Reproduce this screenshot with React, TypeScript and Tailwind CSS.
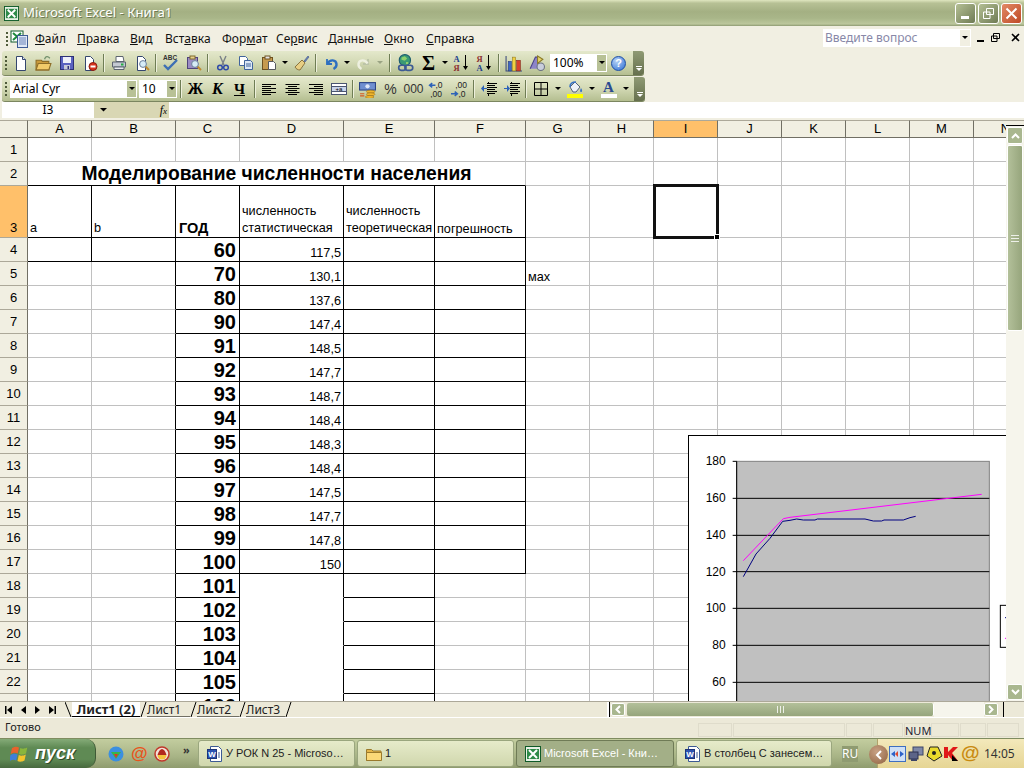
import type { ReactNode } from "react";

const rowHeadCls = "flex justify-center border-r border-b border-r-[#716f64] border-b-[#aca899] text-[13px]";

const menus = [
  { w: "w-[42px]", a: "", u: "Ф", b: "айл" },
  { w: "w-[53px]", a: "", u: "П", b: "равка" },
  { w: "w-[35px]", a: "", u: "В", b: "ид" },
  { w: "w-[57px]", a: "Вст", u: "а", b: "вка" },
  { w: "w-[54px]", a: "Фор", u: "м", b: "ат" },
  { w: "w-[52px]", a: "Се", u: "р", b: "вис" },
  { w: "w-[56px]", a: "", u: "Д", b: "анные" },
  { w: "w-[42px]", a: "", u: "О", b: "кно" },
  { w: "w-[60px]", a: "", u: "С", b: "правка" },
];

const years = [60, 70, 80, 90, 91, 92, 93, 94, 95, 96, 97, 98, 99, 100, 101, 102, 103, 104, 105, 106];
const stats = ["117,5", "130,1", "137,6", "147,4", "148,5", "147,7", "148,7", "148,4", "148,3", "148,4", "147,5", "147,7", "147,8", "150"];
const columns = ["A", "B", "C", "D", "E", "F", "G", "H", "I", "J", "K", "L", "M", "N"];

const S = ({ children, w = 16, h = 16, vb = "0 0 16 16" }: { children: ReactNode; w?: number; h?: number; vb?: string }) => (
  <svg width={w} height={h} viewBox={vb} className="block">
    {children}
  </svg>
);

const Btn = ({ children, w = "w-[23px]" }: { children: ReactNode; w?: string }) => (
  <div className={`${w} h-full flex items-center justify-center shrink-0`}>{children}</div>
);

const Dd = ({ w = "w-[10px]", off = false }: { w?: string; off?: boolean }) => (
  <div className={`${w} h-full flex items-center justify-center shrink-0`}>
    <svg width="6" height="4" viewBox="0 0 6 4">
      <path d="M0 0h6L3 3z" fill={off ? "#9aa383" : "#000"} />
    </svg>
  </div>
);

const Sep = ({ w = "w-[6px]" }: { w?: string }) => (
  <div className={`${w} h-full flex items-center justify-center shrink-0`}>
    <div className="w-px h-[18px] bg-[#6f7d55] border-r border-r-[#eef0dc] box-content" />
  </div>
);

const Grip = () => (
  <div className="w-[7px] h-full flex flex-col items-center justify-center gap-[2px] shrink-0">
    {[0, 1, 2, 3].map((i) => (
      <div key={i} className="w-[2px] h-[2px] bg-[#4f5a3a]" />
    ))}
  </div>
);

const Chevron = () => (
  <div className="w-[11px] h-full ml-auto rounded-r-[3px] bg-[linear-gradient(180deg,#8f9a74,#66704e)] flex flex-col items-center justify-end pb-[3px] gap-[1px]">
    <div className="w-[6px] h-px bg-white" />
    <svg width="6" height="4" viewBox="0 0 6 4">
      <path d="M0 0h6L3 3z" fill="#fff" />
    </svg>
  </div>
);

const Doc = ({ x = 3, y = 1, w = 10, h = 14 }: { x?: number; y?: number; w?: number; h?: number }) => (
  <path d={`M${x + 0.5} ${y + 0.5}h${w - 4}l3 3v${h - 3}h-${w - 1}z`} fill="#fff" stroke="#34466f" />
);

const Glass = () => (
  <g>
    <path d="M11 11l4 4" stroke="#c08a30" strokeWidth="2" />
    <circle cx="9" cy="9" r="3.4" fill="#d6ecf7" stroke="#6a7f9a" />
  </g>
);

const New = () => <S><Doc /><path d="M9.5 1.5v3h3" fill="#dfe5f2" stroke="#34466f" /></S>;
const Open = () => (
  <S w={17} h={17}>
    <path d="M1 5h5l1 1h6v8H1z" fill="#c99a3c" stroke="#8d6d28" />
    <path d="M3 8h12l-2 6H1z" fill="#f2cb6a" stroke="#8d6d28" />
    <path d="M9 4c1-3 3-3 5-1" fill="none" stroke="#6f8e6a" strokeWidth="1.2" />
  </S>
);
const Save = () => (
  <S>
    <rect x="1.5" y="1.5" width="13" height="13" fill="#5a62c0" stroke="#2c3076" />
    <rect x="4" y="2" width="8" height="6" fill="#eef0fa" />
    <rect x="5" y="10" width="6" height="4.5" fill="#c8cad8" />
    <rect x="8.5" y="11" width="1.5" height="3" fill="#2c3076" />
  </S>
);
const Perm = () => (
  <S>
    <Doc w={9} />
    <circle cx="11" cy="11.5" r="4" fill="#d8321e" stroke="#8a1d10" />
    <rect x="8.5" y="10.5" width="5" height="2" fill="#fff" />
  </S>
);
const Printer = () => (
  <S>
    <path d="M5 1.5h7l1 5H5z" fill="#fff" stroke="#5d6470" />
    <path d="M1.5 7h13v5h-13z" fill="#c4c9d2" stroke="#5d6470" />
    <path d="M3 12h10v2.5H3z" fill="#e9ebef" stroke="#5d6470" />
    <rect x="10" y="8.5" width="2.5" height="2" fill="#23b043" />
  </S>
);
const Preview = () => <S><Doc w={9} /><Glass /></S>;
const Spell = () => (
  <S w={17} h={18} vb="0 0 17 18">
    <text x="1" y="6" fontSize="6.5" fontWeight="700" fontFamily="Liberation Sans" fill="#333">ABC</text>
    <path d="M2 11l4 4 9-9" fill="none" stroke="#3d6fb4" strokeWidth="2.4" />
  </S>
);
const Research = () => (
  <S>
    <rect x="1.5" y="2.5" width="10" height="11" fill="#9c8cc4" stroke="#50447c" />
    <rect x="4" y="1" width="5" height="3" fill="#e6d08c" stroke="#7e6a2c" />
    <Glass />
  </S>
);
const Cut = () => (
  <S>
    <path d="M5 1l4 9M11 1L7 10" stroke="#7a8088" strokeWidth="1.4" />
    <circle cx="5" cy="12.5" r="2.3" fill="none" stroke="#2e4aa8" strokeWidth="1.5" />
    <circle cx="11" cy="12.5" r="2.3" fill="none" stroke="#2e4aa8" strokeWidth="1.5" />
  </S>
);
const Copy = () => (
  <S>
    <path d="M1.5 1.5h6l2 2v7h-8z" fill="#fff" stroke="#41649c" />
    <path d="M6.5 5.5h6l2 2v7h-8z" fill="#dde8f6" stroke="#41649c" />
    <path d="M8 9h5M8 11h5" stroke="#41649c" />
  </S>
);
const Paste = () => (
  <S>
    <rect x="1.5" y="2.5" width="10" height="12" fill="#c69a4e" stroke="#6e5220" />
    <rect x="4" y="1" width="5" height="3" fill="#e4e4e4" stroke="#6e5220" />
    <path d="M7.5 6.5h5l2 2v6h-7z" fill="#fff" stroke="#55585e" />
  </S>
);
const Brush = () => (
  <S>
    <path d="M10 6l4-5 1 1-4 5z" fill="#6a83b8" stroke="#3f5486" strokeWidth=".6" />
    <path d="M1 12l7-7 3 3-5 7c-2 0-4-1-5-3z" fill="#e8cf84" stroke="#8a7440" />
  </S>
);
const Undo = ({ c = "#2d6fc0" }: { c?: string }) => (
  <S>
    <path d="M4 4v5h5" fill="none" stroke={c} strokeWidth="1.8" />
    <path d="M4.5 8.5C7 4 13 4.5 13.5 9c.2 2-1 4-3 5" fill="none" stroke={c} strokeWidth="2.4" />
  </S>
);
const Redo = () => (
  <S>
    <g transform="matrix(-1 0 0 1 16 0)">
      <path d="M4 4v5h5" fill="none" stroke="#bcc4a8" strokeWidth="1.8" />
      <path d="M4.5 8.5C7 4 13 4.5 13.5 9c.2 2-1 4-3 5" fill="none" stroke="#eef0e0" strokeWidth="2.4" />
    </g>
  </S>
);
const Link = () => (
  <S w={18} h={18} vb="0 0 16 16">
    <circle cx="7" cy="5.5" r="5" fill="#3a9a74" stroke="#1c5c6e" />
    <path d="M4 3l3-1 2 2-2 2-3-1zM8 7l2 0 0 2-2 0z" fill="#8ed06c" />
    <rect x="1.5" y="10" width="6.5" height="4.5" rx="2.2" fill="none" stroke="#3c5a94" strokeWidth="1.5" />
    <rect x="7" y="10" width="7" height="4.5" rx="2.2" fill="none" stroke="#3c5a94" strokeWidth="1.5" />
  </S>
);
const Sort = ({ top, bot, ct, cb }: { top: string; bot: string; ct: string; cb: string }) => (
  <S w={17} h={18} vb="0 0 17 18">
    <text x="0.5" y="8" fontSize="8.5" fontWeight="700" fontFamily="Liberation Serif" fill={ct}>{top}</text>
    <text x="0.5" y="16.5" fontSize="8.5" fontWeight="700" fontFamily="Liberation Serif" fill={cb}>{bot}</text>
    <path d="M12.5 1v13" stroke="#000" />
    <path d="M10 12h5l-2.5 4z" fill="#000" />
  </S>
);
const Chart = () => (
  <S w={17} h={17}>
    <path d="M1 1v14h15" fill="none" stroke="#3c4a7c" />
    <rect x="3" y="6" width="3" height="9" fill="#3f68c4" stroke="#24366e" strokeWidth=".5" />
    <rect x="7" y="2" width="3" height="13" fill="#f0d040" stroke="#8a7420" strokeWidth=".5" />
    <rect x="11" y="5" width="3.5" height="10" fill="#d8402c" stroke="#7c2214" strokeWidth=".5" />
  </S>
);
const Drawing = () => (
  <S w={17} h={17}>
    <path d="M2 13L7 2h2l2 11" fill="#8c84c8" stroke="#4a4288" />
    <circle cx="12" cy="11" r="3.5" fill="#c9cedc" stroke="#6a7080" />
    <path d="M9 1l5 3-5 4z" fill="#e6d56a" stroke="#8a7a28" />
  </S>
);
const Help = () => (
  <div className="w-[15px] h-[15px] rounded-full border border-[#1c4ea8] bg-[radial-gradient(circle_at_35%_30%,#b6d2f6,#2e6fd4)] flex items-center justify-center text-white text-[11px] font-bold leading-none font-['Liberation_Sans',sans-serif]">?</div>
);
const Lines = ({ kind }: { kind: "l" | "c" | "r" }) => {
  const ws = [14, 9, 14, 9, 14, 9];
  return (
    <S w={15} h={13} vb="0 0 15 13">
      {ws.map((w, i) => (
        <rect key={i} x={kind === "l" ? 0 : kind === "r" ? 15 - w : (15 - w) / 2} y={i * 2 + 1} width={w} height="1" fill="#000" />
      ))}
    </S>
  );
};
const Merge = () => (
  <S>
    <rect x="0.5" y="2.5" width="15" height="11" fill="#fff" stroke="#4a5570" />
    <rect x="0.5" y="5.5" width="15" height="5" fill="#c9d4ea" stroke="#4a5570" />
    <text x="4.5" y="10" fontSize="6" fontFamily="Liberation Sans" fill="#000">+a</text>
  </S>
);
const Currency = () => (
  <S w={17} h={17}>
    <rect x="0.5" y="1.5" width="15" height="7" fill="#6f8fd0" stroke="#2c4484" />
    <circle cx="8" cy="5" r="2" fill="#dfe8f8" />
    <ellipse cx="11" cy="10" rx="4" ry="1.4" fill="#f0b52c" stroke="#8a6414" strokeWidth=".5" />
    <ellipse cx="11" cy="12.5" rx="4" ry="1.4" fill="#f0b52c" stroke="#8a6414" strokeWidth=".5" />
    <ellipse cx="10" cy="15" rx="4" ry="1.4" fill="#f0b52c" stroke="#8a6414" strokeWidth=".5" />
    <path d="M1 12h4M1 14h4" stroke="#d65a20" />
  </S>
);
const Dec = ({ flip = false }: { flip?: boolean }) => (
  <S w={17} h={17}>
    <text x={flip ? 4 : 7} y="7" fontSize="8" fontFamily="Liberation Sans" fill="#222">{flip ? ",00" : ",0"}</text>
    <text x={flip ? 7 : 2} y="15" fontSize="8" fontFamily="Liberation Sans" fill="#222">{flip ? ",0" : ",00"}</text>
    {flip ? (
      <path d="M0 12h5M3.5 10l2.5 2-2.5 2" fill="none" stroke="#2d62b8" strokeWidth="1.4" />
    ) : (
      <path d="M7 4H2M4 2L1.5 4 4 6" fill="none" stroke="#2d62b8" strokeWidth="1.4" />
    )}
  </S>
);
const Indent = ({ right = false }: { right?: boolean }) => (
  <S w={16} h={14} vb="0 0 16 14">
    {[1, 3, 5, 7, 9, 11].map((y) => (
      <rect key={y} x="6" y={y} width={y % 4 === 1 ? 10 : 8} height="1" fill="#000" />
    ))}
    {[0, 12].map((y) => (
      <rect key={y} x="7" y={y} width="1" height="2" fill="#000" />
    ))}
    {right ? (
      <path d="M0 6h3V3l3 3.5L3 10V7H0z" fill="#2d62b8" />
    ) : (
      <path d="M6 6H3V3L0 6.5 3 10V7h3z" fill="#2d62b8" />
    )}
  </S>
);
const Borders = () => (
  <S w={14} h={14} vb="0 0 14 14">
    <path d="M.5.5h13v13H.5zM7 .5v13M.5 7h13" fill="none" stroke="#000" />
  </S>
);
const Fill = () => (
  <div className="flex flex-col items-center">
    <S w={16} h={13} vb="0 0 16 13">
      <path d="M3 6l5-5 5 5-4 5H6z" fill="#eef2f8" stroke="#54607a" />
      <path d="M9 1c-4 0-6 1-6 5" fill="none" stroke="#3872c4" strokeWidth="1.6" />
      <path d="M14 7c1.5 2 1.5 4 0 4s-1-2 0-4z" fill="#3872c4" />
    </S>
    <div className="w-[16px] h-[4px] bg-[#ffff00]" />
  </div>
);
const FontColor = () => (
  <div className="flex flex-col items-center w-[16px]">
    <span className="text-[15px] leading-[13px] font-bold font-['Liberation_Serif',serif] text-[#2a4a90]">A</span>
    <div className="w-[16px] h-[4px] bg-white" />
  </div>
);
const ExcelIcon = ({ size = 16 }: { size?: number }) => (
  <S w={size} h={size}>
    <rect x="0.5" y="0.5" width="15" height="15" fill="#e8f2e6" stroke="#0f5a28" />
    <rect x="2" y="3" width="12" height="10" fill="#2e8a48" />
    <path d="M4 4l8 8M12 4l-8 8" stroke="#fff" strokeWidth="2" />
  </S>
);
const MenuExcel = () => (
  <S w={18} h={18} vb="0 0 18 18">
    <rect x="1" y="1" width="12" height="11" fill="#fff" stroke="#0f5a28" />
    <path d="M3 3l8 7M11 3l-8 7" stroke="#1c8a3c" strokeWidth="2" />
    <rect x="7.5" y="5.5" width="10" height="12" fill="#dfe7f6" stroke="#3c5a94" />
    <path d="M9 8h7M9 10h7M9 12h7M9 14h7" stroke="#6a83b8" />
  </S>
);
const WordIcon = () => (
  <S>
    <path d="M3.5.5h8l3 3v12h-11z" fill="#fff" stroke="#3c5a94" />
    <rect x="0.5" y="3.5" width="9" height="9" fill="#2c52b0" stroke="#1c3478" />
    <text x="1.3" y="10.8" fontSize="8" fontWeight="700" fontFamily="Liberation Sans" fill="#fff">W</text>
    <path d="M11 7h2M11 9h2M11 11h2" stroke="#3c5a94" />
  </S>
);
const FolderIcon = () => (
  <S>
    <path d="M.5 3.5h5l1.5 1.5h8v9.5H.5z" fill="#e4b64a" stroke="#9a7a2c" />
    <path d="M.5 6.5h15v8H.5z" fill="#fbd978" stroke="#9a7a2c" />
  </S>
);

const Title = () => (
  <div className="h-[26px] shrink-0 flex items-center pl-[4px] pr-[2px] bg-[linear-gradient(180deg,#dfe6bf_0%,#b7c195_12%,#a4b083_45%,#a9b689_70%,#bcc79c_92%,#8e9a72_100%)]">
    <ExcelIcon size={15} />
    <span className="ml-[4px] text-[13.2px] text-white font-['Noto_Sans',sans-serif] [text-shadow:1px_1px_#6f7a55]">Microsoft Excel - Книга1</span>
    <div className="ml-auto flex gap-[2px]">
      <div className="w-[21px] h-[21px] rounded-[3px] border border-white bg-[linear-gradient(135deg,#b4bf94,#6f7b54)] flex items-end pl-[5px] pb-[4px]">
        <div className="w-[8px] h-[3px] bg-white" />
      </div>
      <div className="w-[21px] h-[21px] rounded-[3px] border border-white bg-[linear-gradient(135deg,#b4bf94,#6f7b54)] flex items-center justify-center">
        <svg width="11" height="11" viewBox="0 0 11 11">
          <path d="M3.5.5h7v6h-7zM.5 4h6.5v6.5H.5z" fill="none" stroke="#fff" />
        </svg>
      </div>
      <div className="w-[21px] h-[21px] rounded-[3px] border border-white bg-[linear-gradient(135deg,#e28a66,#bf4a26)] flex items-center justify-center">
        <svg width="13" height="13" viewBox="0 0 13 13">
          <path d="M1.5 1.5l10 10M11.5 1.5l-10 10" stroke="#fff" strokeWidth="2" />
        </svg>
      </div>
    </div>
  </div>
);

const MenuBar = () => (
  <div className="h-[25px] shrink-0 flex items-center bg-[#f1efe2] text-[12px] text-[#111] font-['Noto_Sans',sans-serif]">
    <div className="ml-[3px]"><Grip /></div>
    <MenuExcel />
    <div className="flex ml-[7px]">
      {menus.map((m) => (
        <div key={m.a + m.u} className={`${m.w} whitespace-nowrap`}>
          {m.a}<span className="underline">{m.u}</span>{m.b}
        </div>
      ))}
    </div>
    <div className="absolute left-[823px] top-[29px] w-[148px] h-[18px] bg-white flex items-center pl-[2px] text-[12px] text-[#8888a8]">
      Введите вопрос
      <div className="ml-auto w-[11px] h-full bg-[#f1efe2] border-y border-r border-white flex items-center justify-center">
        <svg width="6" height="4" viewBox="0 0 6 4"><path d="M0 0h6L3 3z" fill="#000" /></svg>
      </div>
    </div>
    <div className="absolute left-[976px] top-[33px] flex items-center">
      <div className="w-[9px] h-[9px] flex items-end justify-center"><div className="w-[7px] h-[2px] bg-black" /></div>
      <svg className="ml-[6px]" width="9" height="9" viewBox="0 0 9 9">
        <path d="M2.5.5h6v5h-6zM.5 3h5.500v5.500H.5z" fill="#f1efe2" stroke="#000" />
      </svg>
      <svg className="ml-[11px]" width="9" height="9" viewBox="0 0 9 9">
        <path d="M1 1l7 7M8 1L1 8" stroke="#000" strokeWidth="1.6" />
      </svg>
    </div>
  </div>
);

const TB = ({ children, w }: { children: ReactNode; w: string }) => (
  <div className={`${w} h-[25px] ml-[2px] flex items-center rounded-l-[3px] rounded-r-[3px] border-b border-b-[#7b8660] bg-[linear-gradient(180deg,#e4e8cb_0%,#d4dab6_45%,#b4be90_100%)]`}>
    {children}
  </div>
);

const Toolbars = () => (
  <div className="h-[51px] shrink-0 bg-[#f1efe2] flex flex-col gap-px">
    <TB w="w-[642px]">
      <Grip />
      <Btn><New /></Btn><Btn><Open /></Btn><Btn><Save /></Btn><Btn><Perm /></Btn>
      <Sep />
      <Btn><Printer /></Btn><Btn><Preview /></Btn>
      <Sep />
      <Btn><Spell /></Btn><Btn><Research /></Btn>
      <Sep />
      <Btn><Cut /></Btn><Btn><Copy /></Btn><Btn><Paste /></Btn><Dd />
      <Btn><Brush /></Btn>
      <Sep />
      <Btn><Undo /></Btn><Dd />
      <Btn><Redo /></Btn><Dd off />
      <Sep w="w-[9px]" />
      <Btn><Link /></Btn>
      <Btn><span className="font-['Liberation_Serif',serif] font-bold text-[20px] leading-none">Σ</span></Btn><Dd />
      <Btn><Sort top="A" bot="Я" ct="#1f3f8c" cb="#8c2f2f" /></Btn>
      <Btn><Sort top="Я" bot="A" ct="#8c2f2f" cb="#1f3f8c" /></Btn>
      <Sep />
      <Btn><Chart /></Btn><Btn><Drawing /></Btn>
      <div className="ml-[2px] w-[57px] h-[18px] bg-white flex items-center pl-[3px] text-[12px] font-['Noto_Sans',sans-serif] shrink-0">
        100%
        <div className="ml-auto w-[11px] h-full bg-[#b8c196] border border-white flex items-center justify-center">
          <svg width="6" height="4" viewBox="0 0 6 4"><path d="M0 0h6L3 3z" fill="#000" /></svg>
        </div>
      </div>
      <Btn><Help /></Btn>
      <Chevron />
    </TB>
    <TB w="w-[643px]">
      <Grip />
      <div className="ml-px w-[127px] h-[18px] bg-white flex items-center pl-[3px] text-[12px] font-['Noto_Sans',sans-serif] shrink-0">
        Arial Cyr
        <div className="ml-auto w-[11px] h-full bg-[#b8c196] border border-white flex items-center justify-center">
          <svg width="6" height="4" viewBox="0 0 6 4"><path d="M0 0h6L3 3z" fill="#000" /></svg>
        </div>
      </div>
      <div className="ml-[2px] w-[38px] h-[18px] bg-white flex items-center pl-[3px] text-[12px] font-['Noto_Sans',sans-serif] shrink-0">
        10
        <div className="ml-auto w-[11px] h-full bg-[#b8c196] border border-white flex items-center justify-center">
          <svg width="6" height="4" viewBox="0 0 6 4"><path d="M0 0h6L3 3z" fill="#000" /></svg>
        </div>
      </div>
      <Sep w="w-[7px]" />
      <Btn><span className="font-['Liberation_Serif',serif] font-bold text-[16px] leading-none">Ж</span></Btn>
      <Btn w="w-[21px]"><span className="font-['Liberation_Serif',serif] font-bold italic text-[16px] leading-none">К</span></Btn>
      <Btn><span className="font-['Liberation_Serif',serif] font-bold text-[15px] leading-none underline">Ч</span></Btn>
      <Sep w="w-[7px]" />
      <Btn><Lines kind="l" /></Btn><Btn><Lines kind="c" /></Btn><Btn><Lines kind="r" /></Btn><Btn><Merge /></Btn>
      <Sep />
      <Btn><Currency /></Btn>
      <Btn><span className="font-['Liberation_Sans',sans-serif] text-[14px] text-[#333]">%</span></Btn>
      <Btn><span className="font-['Liberation_Sans',sans-serif] text-[12px] text-[#333]">000</span></Btn>
      <Btn><Dec /></Btn><Btn><Dec flip /></Btn>
      <Sep />
      <Btn><Indent /></Btn><Btn><Indent right /></Btn>
      <Sep />
      <Btn><Borders /></Btn><Dd w="w-[11px]" />
      <Btn><Fill /></Btn><Dd w="w-[11px]" />
      <Btn><FontColor /></Btn><Dd w="w-[11px]" />
      <Chevron />
    </TB>
  </div>
);

const FormulaBar = () => (
  <div className="h-[18px] shrink-0 bg-[#f1efe2]">
    <div className="h-[16px] flex items-stretch">
      <div className="ml-[2px] w-[92px] bg-white text-center text-[12px] leading-[16px] font-['Noto_Sans',sans-serif]">I3</div>
      <div className="w-[75px] bg-[#d9d7b4] flex items-center justify-between pl-[6px] pr-[2px]">
        <svg width="7" height="4" viewBox="0 0 7 4"><path d="M0 0h7L3.5 3.5z" fill="#000" /></svg>
        <span className="font-['Liberation_Serif',serif] italic text-[12px] leading-none">f<span className="text-[9px]">x</span></span>
      </div>
      <div className="flex-1 bg-white" />
    </div>
  </div>
);

const Cell = ({ row, col }: { row: number; col: number }) => {
  const inTable = row >= 3 && row <= 17 && col >= 0 && col <= 5;
  let right = "border-r-[#c0c0c0]";
  let bottom = "border-b-[#c0c0c0]";
  if (row <= 4 && row >= 3 && col <= 5) {
    right = "border-r-black";
    bottom = "border-b-black";
  } else if (inTable) {
    if (col >= 1) right = "border-r-black";
    if (col >= 2) bottom = "border-b-black";
  } else if (row > 17) {
    if (col >= 1 && col <= 4) right = "border-r-black";
    if (col === 2 || col === 4) bottom = "border-b-black";
    if (col === 3) bottom = "border-b-white";
  }
  let content: ReactNode = null;
  if (row === 3 && col === 0) content = <span className="pl-[2px] pb-px">a</span>;
  if (row === 3 && col === 1) content = <span className="pl-[2px] pb-px">b</span>;
  if (row === 3 && col === 2) content = <span className="pl-[3px] font-bold text-[14.5px] leading-[18px]">ГОД</span>;
  if (row === 3 && col === 3) content = <span className="pl-[2px] leading-[17px]">численность<br />статистическая</span>;
  if (row === 3 && col === 4) content = <span className="pl-[2px] leading-[17px]">численность<br />теоретическая</span>;
  if (row === 3 && col === 5) content = <span className="pl-[2px]">погрешность</span>;
  if (row >= 4 && col === 2) content = <span className="ml-auto pr-[3px] font-bold text-[20px] leading-[21px]">{years[row - 4]}</span>;
  if (row >= 4 && row <= 17 && col === 3) content = <span className="ml-auto pr-[2px]">{stats[row - 4]}</span>;
  if (row === 5 && col === 6) content = <span className="pl-[2px]">мах</span>;
  return (
    <div className={`min-w-0 border-r border-b flex items-end overflow-visible whitespace-nowrap text-[12.7px] leading-[15px] relative ${right} ${bottom}`}>
      {content}
      {row === 3 && col === 8 && (
        <div className="absolute -left-px -top-[2px] w-[66px] h-[55px] border-[3px] border-[#111] z-10">
          <div className="absolute -right-[4px] -bottom-[4px] w-[6px] h-[6px] bg-black border border-white" />
        </div>
      )}
    </div>
  );
};

const blueLine = "190,440 228,372 270,325 308,274 330,271 350,267 370,270 405,270 412,267 555,267 580,273 605,273 612,270 670,270 690,263 707,259";
const pinkLine = "190,392 310,266 330,262 905,193";
const ticks = [
  { v: 180, y: 94 },
  { v: 160, y: 205 },
  { v: 140, y: 316 },
  { v: 120, y: 425 },
  { v: 100, y: 535 },
  { v: 80, y: 646 },
  { v: 60, y: 757 },
];

const ChartObject = () => (
  <div className="absolute left-[688px] top-[315px] w-[318px] h-[266px] bg-white border-l border-t border-black overflow-hidden z-20">
    {/* drawn at the 3x scale the plot was measured in */}
    <svg width="1000" height="900" viewBox="0 0 3000 2700" className="block">
      <g transform="translate(-27,-18)">
        <rect x="170" y="94" width="758" height="900" fill="#c0c0c0" stroke="#808080" strokeWidth="3" />
        {ticks.map((t) => (
          <g key={t.v}>
            {t.v !== 180 && <line x1="158" x2="928" y1={t.y} y2={t.y} stroke="#000" strokeWidth="3" />}
            {t.v === 180 && <line x1="158" x2="170" y1={t.y} y2={t.y} stroke="#000" strokeWidth="3" />}
            <text x="137" y={t.y + 12} textAnchor="end" fontSize="36" fontFamily="Liberation Sans" fill="#000">{t.v}</text>
          </g>
        ))}
        <line x1="170" x2="170" y1="94" y2="994" stroke="#000" strokeWidth="3" />
        <polyline points={blueLine} fill="none" stroke="#000080" strokeWidth="3" />
        <polyline points={pinkLine} fill="none" stroke="#ff00ff" strokeWidth="3" />
        <rect x="961" y="526" width="60" height="126" fill="#fff" stroke="#000" strokeWidth="3" />
        <line x1="975" x2="985" y1="563" y2="563" stroke="#000080" strokeWidth="3" />
        <line x1="975" x2="985" y1="625" y2="625" stroke="#ff00ff" strokeWidth="3" />
      </g>
    </svg>
  </div>
);

const Sheet = () => {
  const rows = Array.from({ length: 23 }, (_, i) => i + 1);
  return (
    <div className="relative flex-1 h-full overflow-hidden bg-white text-black font-['Liberation_Sans',sans-serif]">
      <div className="w-[1038px] grid grid-cols-[28px_64px_84px_64px_104px_91px_91px_64px_64px_64px_64px_64px_64px_64px_64px] grid-rows-[18px_24px_24px_52px_repeat(20,24px)]">
        <div className="border-t border-r border-b border-t-[#aca899] border-r-[#716f64] border-b-[#716f64] bg-[#f1efe2]" />
        {columns.map((c) => (
          <div
            key={c}
            className={`border-t border-r border-b border-t-[#aca899] border-r-[#716f64] border-b-[#716f64] flex items-center justify-center text-[13px] ${c === "I" ? "bg-[#ffc06a]" : "bg-[#f1efe2]"}`}
          >
            {c}
          </div>
        ))}
        {rows.map((r) => (
          <div key={r} className="contents">
            <div className={`${rowHeadCls} ${r === 3 ? "bg-[#ffc06a] items-end" : "bg-[#f1efe2] items-center pt-px"}`}>{r}</div>
            {r === 2 ? (
              <>
                <div className="col-span-6 pt-[2px] border-r border-b border-r-[#c0c0c0] border-b-black flex items-center justify-center font-bold text-[19.3px] whitespace-nowrap">
                  Моделирование численности населения
                </div>
                {[6, 7, 8, 9, 10, 11, 12, 13].map((c) => (
                  <Cell key={c} row={r} col={c} />
                ))}
              </>
            ) : (
              columns.map((_, c) => <Cell key={c} row={r} col={c} />)
            )}
          </div>
        ))}
      </div>
      <ChartObject />
    </div>
  );
};

const VScroll = () => (
  <div className="w-[18px] h-full shrink-0 flex flex-col bg-[#f6f5ec]">
    <div className="h-[5px] bg-[#f1efe2] border-t border-t-[#aca899]" />
    <div className="h-px bg-black" />
    <div className="h-[17px] mt-[1px] mx-[1px] bg-[#a9b78f] border border-white rounded-[2px] flex items-center justify-center">
      <svg width="9" height="6" viewBox="0 0 9 6"><path d="M1 5l3.5-3.5L8 5" fill="none" stroke="#fff" strokeWidth="2" /></svg>
    </div>
    <div className="h-[186px] mx-[1px] mt-[1px] rounded-[2px] border border-white bg-[linear-gradient(90deg,#b3c09a,#96a57c)] flex items-center justify-center">
      <div className="w-[8px] h-[7px] border-y border-white/80 relative after:absolute after:left-0 after:right-0 after:top-[2px] after:h-px after:bg-white/80" />
    </div>
    <div className="mt-auto h-[16px] mb-px mx-[1px] bg-[#a9b78f] border border-white rounded-[2px] flex items-center justify-center">
      <svg width="9" height="6" viewBox="0 0 9 6"><path d="M1 1l3.5 3.5L8 1" fill="none" stroke="#fff" strokeWidth="2" /></svg>
    </div>
  </div>
);

const Slant = ({ back = false }: { back?: boolean }) => (
  <svg width="7" height="16" viewBox="0 0 7 16" className="block shrink-0">
    {back ? <path d="M0 0l6 15" stroke="#000" fill="none" /> : <path d="M6 0L1 15" stroke="#000" fill="none" />}
  </svg>
);

const Tabs = () => (
  <div className="h-[16px] shrink-0 flex items-stretch bg-[#ece9d8] border-t border-t-[#aca899]">
    <div className="w-[65px] flex items-center pl-[5px] gap-[9px] shrink-0">
      <svg width="7" height="8" viewBox="0 0 7 8"><path d="M0 0h1.5v8H0zM7 0v8L2 4z" fill="#000" /></svg>
      <svg width="5" height="8" viewBox="0 0 5 8"><path d="M5 0v8L0 4z" fill="#000" /></svg>
      <svg width="5" height="8" viewBox="0 0 5 8"><path d="M0 0v8l5-4z" fill="#000" /></svg>
      <svg width="7" height="8" viewBox="0 0 7 8"><path d="M5.5 0H7v8H5.5zM0 0v8l5-4z" fill="#000" /></svg>
    </div>
    <div className="flex items-stretch w-[542px] text-[12px] leading-[15px] font-['Noto_Sans',sans-serif] text-[#222] shrink-0">
      <Slant back />
      <div className="w-[68px] bg-white border-b border-b-black font-bold text-[13px] text-center whitespace-nowrap">Лист1 (2)</div>
      <Slant />
      <div className="w-[43px] border-b border-b-[#716f64]">Лист1</div>
      <Slant />
      <div className="w-[42px] border-b border-b-[#716f64]">Лист2</div>
      <Slant />
      <div className="w-[39px] border-b border-b-[#716f64]">Лист3</div>
      <Slant />
    </div>
    <div className="flex items-center h-full w-[3px] border-l-2 border-l-white border-r border-r-black shrink-0" />
    <div className="w-[14px] ml-[1px] my-[1px] bg-[#a9b78f] border border-white rounded-[2px] flex items-center justify-center shrink-0">
      <svg width="6" height="9" viewBox="0 0 6 9"><path d="M5 1L1.5 4.500 5 8" fill="none" stroke="#fff" strokeWidth="2" /></svg>
    </div>
    <div className="w-[307px] ml-[2px] my-[1px] rounded-[2px] border-r border-r-white bg-[linear-gradient(180deg,#b3c09a,#96a57c)] flex items-center justify-center shrink-0">
      <div className="w-[7px] h-[7px] border-x border-white/80 relative after:absolute after:top-0 after:bottom-0 after:left-[2px] after:w-px after:bg-white/80" />
    </div>
    <div className="w-[50px] bg-[#f6f5ec] shrink-0" />
    <div className="w-[14px] my-[1px] bg-[#a9b78f] border border-white rounded-[2px] flex items-center justify-center shrink-0">
      <svg width="6" height="9" viewBox="0 0 6 9"><path d="M1 1l3.500 3.500L1 8" fill="none" stroke="#fff" strokeWidth="2" /></svg>
    </div>
    <div className="w-[6px] border-r border-r-black shrink-0" />
  </div>
);

const panels = [
  { w: "w-[34px]", t: "" },
  { w: "w-[112px]", t: "" },
  { w: "w-[26px]", t: "" },
  { w: "w-[30px]", t: "" },
  { w: "w-[26px]", t: "NUM" },
  { w: "w-[28px]", t: "" },
  { w: "w-[26px]", t: "" },
  { w: "w-[32px]", t: "" },
];

const Status = () => (
  <div className="h-[21px] shrink-0 border-t border-t-white bg-[#ece9d8] flex items-end pb-px text-[11px] font-['Noto_Sans',sans-serif] text-[#222]">
    <div className="w-[698px] pl-[5px] pb-px leading-[18px]">Готово</div>
    <div className="flex gap-px">
      {panels.map((p, i) => (
        <div key={i} className={`${p.w} h-[14px] border border-[#dfdccb] text-[11px] leading-[13px] text-center text-[#223]`}>{p.t}</div>
      ))}
    </div>
  </div>
);

const XpFlag = () => (
  <svg width="20" height="18" viewBox="0 0 20 18">
    <path d="M2 3c3-1.500 5-1.500 7-.5l-1.300 6c-2-1-4-1-7 .5z" fill="#e8622c" />
    <path d="M10.300 3c2 1 4 1 7-.5l-1.300 6c-3 1.500-5 1.500-7 .5z" fill="#8ab63c" />
    <path d="M.5 10c3-1.500 5-1.500 7-.5l-1.300 6c-2-1-4-1-7 .5z" fill="#3f7fd8" />
    <path d="M8.800 10c2 1 4 1 7-.5l-1.300 6c-3 1.500-5 1.500-7 .5z" fill="#f4c42c" />
  </svg>
);

const TaskBtn = ({ w, icon, text, active = false }: { w: string; icon: ReactNode; text: string; active?: boolean }) => (
  <div
    className={`${w} h-[27px] shrink-0 flex items-center gap-[3px] pl-[8px] rounded-[3px] border text-[11px] whitespace-nowrap overflow-hidden font-['Liberation_Sans',sans-serif] ${
      active
        ? "bg-[#a3af87] border-[#6f7b56] text-white"
        : "bg-[linear-gradient(180deg,#e6ebca,#d0d7ad)] border-[#9aa67e] text-[#222]"
    }`}
  >
    {icon}
    <span>{text}</span>
  </div>
);

const Taskbar = () => (
  <div className="h-[30px] shrink-0 flex items-center border-t border-t-[#7f8c60] bg-[linear-gradient(180deg,#c3cd9f,#a8b486_60%,#8f9b6e)]">
    <div className="w-[96px] h-full shrink-0 rounded-r-[10px] bg-[linear-gradient(180deg,#85ab78,#5f8a54_30%,#5f8a54_70%,#47693e)] border-r border-r-[#3f5a36] flex items-center pl-[10px] gap-[5px] text-white font-bold italic text-[18px] font-['Liberation_Sans',sans-serif] [text-shadow:1px_1px_#2f4a28]">
      <XpFlag />
      <span>пуск</span>
    </div>
    <div className="w-[102px] shrink-0 flex items-center pl-[12px] gap-[7px]">
      <svg width="16" height="16" viewBox="0 0 16 16">
        <circle cx="8" cy="8" r="7.500" fill="#3b8fe0" />
        <path d="M3 6h10L8 13z" fill="#38b54a" />
        <path d="M6 8h4l-2 4z" fill="#e0342c" />
      </svg>
      <div className="w-[16px] h-[16px] text-[#e8541c] text-[17px] leading-[15px] font-bold text-center font-['Liberation_Sans',sans-serif]">@</div>
      <svg width="16" height="16" viewBox="0 0 16 16">
        <circle cx="8" cy="8" r="7" fill="#f2e2d8" stroke="#c0392c" strokeWidth="1.500" />
        <path d="M3.500 9c1-4 3-6 4.500-6s3.500 2 4.500 6z" fill="#b2281e" />
        <path d="M3.500 9h9a4.500 4.500 0 0 1-9 0z" fill="#f4c23c" />
      </svg>
      <span className="ml-[6px] mb-[8px] text-[11px] leading-none font-bold text-[#333]">»</span>
    </div>
    <div className="flex gap-[2px]">
      <TaskBtn w="w-[157px]" icon={<WordIcon />} text="У РОК N 25 - Microso…" />
      <TaskBtn w="w-[157px]" icon={<FolderIcon />} text="1" />
      <TaskBtn w="w-[158px]" icon={<ExcelIcon />} text="Microsoft Excel - Кни…" active />
      <TaskBtn w="w-[156px]" icon={<WordIcon />} text="В столбец С занесем…" />
    </div>
    <div className="ml-[10px] w-[16px] h-[16px] bg-[#8f9b71] text-white text-[12px] leading-[16px] text-center font-['Noto_Sans',sans-serif] shrink-0">RU</div>
    <div className="ml-[19px] flex-1 h-full flex items-center bg-[linear-gradient(180deg,#f3e9bb,#e6d594)] border-l border-l-[#b0a26a] relative">
      <div className="absolute -left-[9px] top-[6px] w-[19px] h-[19px] rounded-full bg-[radial-gradient(circle_at_40%_35%,#c8a184,#8f6240)] flex items-center justify-center">
        <svg width="8" height="10" viewBox="0 0 8 10"><path d="M6 1L2 5l4 4" fill="none" stroke="#fff" strokeWidth="2" /></svg>
      </div>
      <div className="ml-[11px] flex items-center gap-[2px]">
        <svg width="17" height="16" viewBox="0 0 17 16">
          <rect x="0.500" y="0.500" width="16" height="15" fill="#cfe0f6" stroke="#3f6fc0" />
          <path d="M2 8l4-3v6zM15 8l-4-3v6z" fill="#2d62c8" />
          <path d="M6 8l3-3v6z" fill="#e0482c" />
        </svg>
        <svg width="16" height="16" viewBox="0 0 16 16">
          <rect x="5" y="1" width="10" height="8" fill="#7f88a8" stroke="#3c4468" />
          <rect x="1" y="6" width="9" height="7" fill="#5c6488" stroke="#2c3050" />
          <rect x="3" y="13" width="6" height="2" fill="#3c4468" />
        </svg>
        <svg width="17" height="16" viewBox="0 0 17 16">
          <path d="M4 1h8l4 9-8 5-7-5z" fill="#eada2c" stroke="#222" />
          <circle cx="8" cy="7" r="2" fill="#222" />
        </svg>
        <svg className="-ml-[2px]" width="16" height="16" viewBox="0 0 16 16">
          <path d="M1 1h4v5l5-5h5L9 7l6 8h-5L5 9v3H1z" fill="#e01818" />
          <path d="M9 9l6 6H9z" fill="#000" />
        </svg>
        <div className="w-[17px] h-[17px] text-[#c98a10] text-[19px] leading-[16px] font-bold text-center font-['Liberation_Sans',sans-serif]">@</div>
      </div>
      <span className="ml-[6px] text-[12px] text-[#333] font-['Noto_Sans',sans-serif]">14:05</span>
    </div>
  </div>
);

export default function App() {
  return (
    <div className="relative w-[1024px] h-[768px] overflow-hidden flex flex-col bg-[#f1efe2] text-black">
      <Title />
      <MenuBar />
      <Toolbars />
      <FormulaBar />
      <div className="h-[581px] shrink-0 flex">
        <Sheet />
        <VScroll />
      </div>
      <Tabs />
      <Status />
      <Taskbar />
    </div>
  );
}
